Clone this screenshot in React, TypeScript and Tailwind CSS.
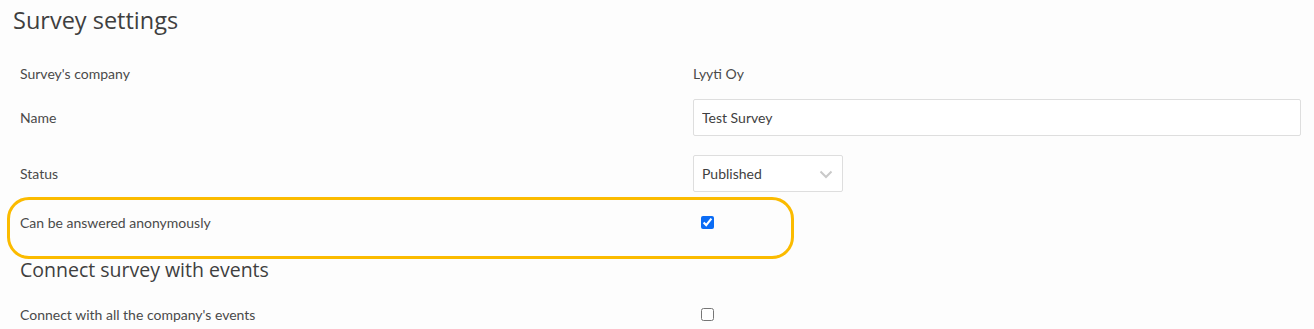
import { useState } from "react"

const labelFont = { fontFamily: "Lato, 'Open Sans', sans-serif" }

function Row({ label, children, className = "" }: { label: string; children?: React.ReactNode; className?: string }) {
  return (
    <div className={`flex items-center pl-[20px] ${className}`}>
      <div className="w-[673px] shrink-0 text-[14px] text-[#4a4a4a]">{label}</div>
      <div className="flex-1 flex items-center pr-[13px]">{children}</div>
    </div>
  )
}

export default function App() {
  const [name, setName] = useState("Test Survey")
  const [anon, setAnon] = useState(true)
  const [allEvents, setAllEvents] = useState(false)

  return (
    <div className="min-h-screen w-full bg-[#fdfdfd] relative" style={labelFont}>
      <h1
        className="pl-[13px] pt-[6px] h-[34px] text-[23.5px] leading-[28px] text-[#3f3f3f]"
        style={{ fontFamily: "'Open Sans', 'Noto Sans', sans-serif" }}
      >
        Survey settings
      </h1>

      <Row label="Survey's company" className="mt-[19px] h-[40px]">
        <span className="text-[14px] text-[#4a4a4a]">Lyyti Oy</span>
      </Row>

      <Row label="Name" className="h-[48px]">
        <input
          value={name}
          onChange={(e) => setName(e.target.value)}
          className="w-full h-[37px] border border-[#dedede] rounded-[2px] bg-white px-[8px] text-[14px] text-[#3f3f3f] outline-none"
        />
      </Row>

      <Row label="Status" className="mt-[8px] h-[48px]">
        <div className="relative w-[150px] h-[37px] border border-[#dedede] rounded-[2px] bg-white flex items-center px-[8px] text-[14px] text-[#3f3f3f]">
          Published
          <svg className="absolute right-[9px] top-[14px]" width="14" height="9" viewBox="0 0 14 9" fill="none">
            <path d="M1.5 1.5 L7 7 L12.5 1.5" stroke="#c9c9c9" strokeWidth="2" />
          </svg>
        </div>
      </Row>

      <div className="relative mt-[1px]">
        <Row label="Can be answered anonymously" className="h-[48px]">
          <input
            type="checkbox"
            checked={anon}
            onChange={(e) => setAnon(e.target.checked)}
            className="ml-[8px] w-[13px] h-[13px] accent-[#0b6cf5]"
          />
        </Row>
        {/* highlight annotation */}
        <div className="pointer-events-none absolute left-[7px] top-[-1px] w-[787px] h-[62px] border-[3px] border-[#fbbb00] rounded-[22px]" />
      </div>

      <h2
        className="mt-[4px] h-[40px] flex items-center pl-[20px] text-[19.5px] text-[#3f3f3f]"
        style={{ fontFamily: "'Open Sans', 'Noto Sans', sans-serif" }}
      >
        Connect survey with events
      </h2>

      <Row label="Connect with all the company's events" className="h-[48px]">
        <input
          type="checkbox"
          checked={allEvents}
          onChange={(e) => setAllEvents(e.target.checked)}
          className="ml-[8px] w-[13px] h-[13px] accent-[#0b6cf5]"
        />
      </Row>
    </div>
  )
}
